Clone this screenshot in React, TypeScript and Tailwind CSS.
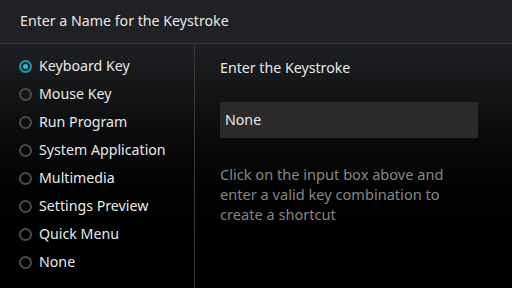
import React from "react";

const items = [
  "Keyboard Key",
  "Mouse Key",
  "Run Program",
  "System Application",
  "Multimedia",
  "Settings Preview",
  "Quick Menu",
  "None",
];

export default function App() {
  return (
    <div
      className="w-[512px] h-[288px] flex flex-col overflow-hidden text-[14.2px] text-[#e8e8e8]"
      style={{ fontFamily: '"Noto Sans", "Open Sans", sans-serif' }}
    >
      <div className="h-[44px] shrink-0 bg-[#202124] border-b border-[#3c3c3c] flex items-center pl-[20px] leading-none">
        Enter a Name for the Keystroke
      </div>
      <div className="flex-1 flex bg-gradient-to-b from-[#1f2023] to-[#000000]">
        <div className="w-[195px] shrink-0 border-r border-[#3a3a3a] pt-[8px] flex flex-col">
          {items.map((t, i) => (
            <div key={t} className="h-[28px] flex items-center pl-[19px] gap-[7px]">
              {i === 0 ? (
                <div className="w-[13px] h-[13px] rounded-full border-2 border-[#0fa3b8] flex items-center justify-center">
                  <div className="w-[5px] h-[5px] rounded-full bg-[#18c4da]" />
                </div>
              ) : (
                <div className="w-[13px] h-[13px] rounded-full border-2 border-[#4c4c4c]" />
              )}
              <span className="leading-none">{t}</span>
            </div>
          ))}
        </div>
        <div className="flex-1 pl-[25px] pt-[15px] flex flex-col">
          <div className="h-[18px] flex items-center">Enter the Keystroke</div>
          <div className="mt-[25px] w-[258px] h-[36px] bg-[#2b2b2b] flex items-center pl-[5px]">None</div>
          <div className="mt-[26px] w-[250px] text-[14.6px] text-[#858585] leading-[20px]">
            Click on the input box above and enter a valid key combination to create a shortcut
          </div>
        </div>
      </div>
    </div>
  );
}
